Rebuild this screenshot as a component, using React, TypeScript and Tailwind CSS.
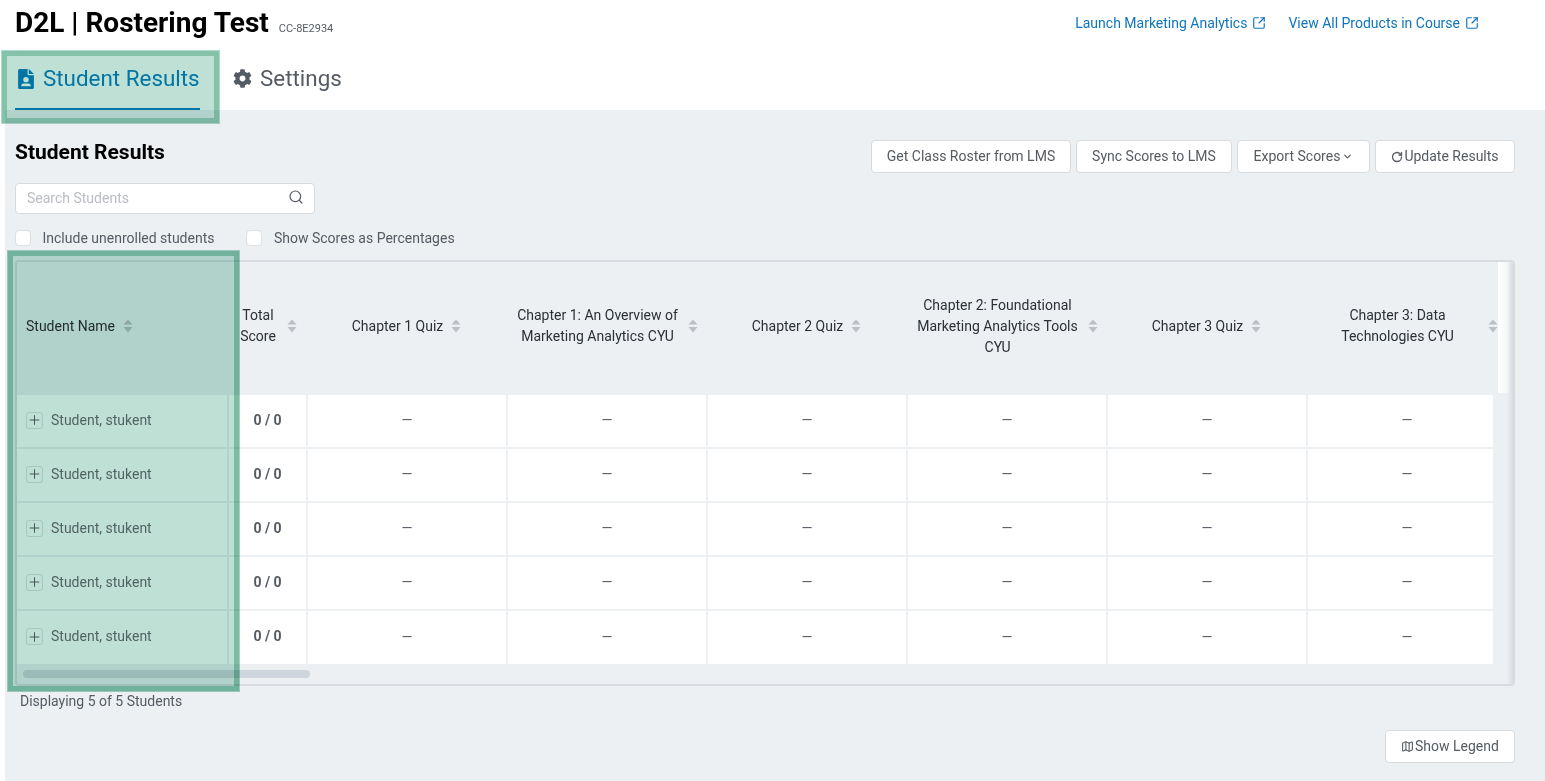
import { Search, SquareArrowOutUpRight, ChevronDown, RotateCw, Plus, Map } from "lucide-react";

const chapters = [
  "Chapter 1 Quiz",
  "Chapter 1: An Overview of Marketing Analytics CYU",
  "Chapter 2 Quiz",
  "Chapter 2: Foundational Marketing Analytics Tools CYU",
  "Chapter 3 Quiz",
  "Chapter 3: Data Technologies CYU",
];

const SortIcon = () => (
  <svg width="10" height="14" viewBox="0 0 10 14" className="shrink-0 text-[#bcc0c6]" fill="currentColor">
    <path d="M5 0.5 L9.5 5.5 H0.5 Z" />
    <path d="M5 13.5 L9.5 8 H0.5 Z" />
  </svg>
);

const FileUser = () => (
  <svg width="16" height="20" viewBox="0 0 15 19" fill="currentColor" className="shrink-0">
    <path
      fillRule="evenodd"
      d="M1.5 0 H9 V5 a1 1 0 0 0 1 1 H15 V17.5 a1.5 1.5 0 0 1-1.5 1.5 H1.5 A1.5 1.5 0 0 1 0 17.5 V1.5 A1.5 1.5 0 0 1 1.5 0 Z M7.5 7.5 a2.6 2.6 0 1 0 0 5.2 a2.6 2.6 0 0 0 0-5.2 Z M3 16.4 h9 v-1 a2 2 0 0 0-2-1.6 H5 a2 2 0 0 0-2 1.6 Z"
    />
    <path d="M10.2 0 L15 4.8 H10.2 Z" />
  </svg>
);

const Gear = () => (
  <svg width="19" height="19" viewBox="0 0 512 512" fill="currentColor" className="shrink-0">
    <path d="M487.4 315.7l-42.6-24.6c4.3-23.2 4.3-47 0-70.2l42.6-24.6c4.9-2.8 7.1-8.6 5.5-14-11.1-35.6-30-67.8-54.7-94.6-3.8-4.1-10-5.1-14.8-2.3L380.8 110c-17.9-15.4-38.5-27.3-60.8-35.1V25.8c0-5.6-3.9-10.5-9.4-11.7-36.7-8.2-74.3-7.8-109.2 0-5.5 1.2-9.4 6.1-9.4 11.7V75c-22.2 7.9-42.8 19.8-60.8 35.1L88.7 85.5c-4.9-2.8-11-1.9-14.8 2.3-24.7 26.7-43.6 58.9-54.7 94.6-1.7 5.4.6 11.2 5.5 14L67.3 221c-4.3 23.2-4.3 47 0 70.2l-42.6 24.6c-4.9 2.8-7.1 8.6-5.5 14 11.1 35.6 30 67.8 54.7 94.6 3.8 4.1 10 5.1 14.8 2.3l42.6-24.6c17.9 15.4 38.5 27.3 60.8 35.1v49.2c0 5.6 3.9 10.5 9.4 11.7 36.7 8.2 74.3 7.8 109.2 0 5.5-1.2 9.4-6.1 9.4-11.7v-49.2c22.2-7.9 42.8-19.8 60.8-35.1l42.6 24.6c4.9 2.8 11 1.9 14.8-2.3 24.7-26.7 43.6-58.9 54.7-94.6 1.5-5.5-.7-11.3-5.6-14.1zM256 336c-44.1 0-80-35.9-80-80s35.9-80 80-80 80 35.9 80 80-35.9 80-80 80z" />
  </svg>
);

const Btn = ({ children, className = "" }: { children: React.ReactNode; className?: string }) => (
  <button className={`h-[33px] rounded-[4px] border border-[#d8dade] bg-white text-[14px] text-[#555b63] flex items-center justify-center ${className}`}>
    {children}
  </button>
);

const Check = ({ label, className = "" }: { label: string; className?: string }) => (
  <label className={`flex items-center ${className}`}>
    <span className="w-[16px] h-[16px] rounded-[4px] border border-[#dcdfe3] bg-white shrink-0" />
    <span className="ml-[11.5px] text-[14px] text-[#555b63]">{label}</span>
  </label>
);

const Row = ({ last }: { last?: boolean }) => (
  <div className={`flex ${last ? "h-[53px]" : "h-[54px] border-b-2 border-[#edf0f3]"}`}>
    <div className="w-[212px] shrink-0 flex items-center bg-white border-r-2 border-[#edf0f3] pl-[9px] pb-[2px]">
      <span className="w-[17px] h-[17px] rounded-[3px] border border-[#dfe3e6] flex items-center justify-center text-[#555b63]">
        <Plus size={16} strokeWidth={1.5} />
      </span>
      <span className="ml-[8px] text-[14px] text-[#6b7178]">Student, stukent</span>
    </div>
    <div className="w-[79px] shrink-0 flex items-center justify-center bg-white border-r-2 border-[#edf0f3] pb-[2px] text-[14px] font-bold text-[#555b63]">
      0 / 0
    </div>
    {chapters.map((c, i) => (
      <div
        key={c}
        className={`w-[200px] shrink-0 flex items-center justify-center bg-white pb-[1px] text-[14px] text-[#555b63] ${i < 5 ? "border-r-2 border-[#edf0f3]" : "pr-[2px]"}`}
      >
        —
      </div>
    ))}
  </div>
);

export default function App() {
  return (
    <div className="relative w-[1545px] h-[781px] overflow-hidden bg-white font-[family-name:Roboto]">
      <div className="h-[51px] flex items-center justify-between pl-[15px] pr-[66px]">
        <div className="flex items-baseline -mt-[5px]">
          <h1 className="text-[28px] leading-[44px] font-bold text-black">D2L | Rostering Test</h1>
          <span className="ml-[10px] text-[11px] text-[#555b63]">CC-8E2934</span>
        </div>
        <div className="flex items-center gap-[22px] text-[14px] text-[#0f75bc] -mt-[5px]">
          <a className="flex items-center gap-[5px]">
            Launch Marketing Analytics <SquareArrowOutUpRight size={14} strokeWidth={2} />
          </a>
          <a className="flex items-center gap-[5px]">
            View All Products in Course <SquareArrowOutUpRight size={14} strokeWidth={2} />
          </a>
        </div>
      </div>

      <div className="h-[59px] flex pl-[15px]">
        <div className="w-[185px] h-[59px] border-b-2 border-[#0085c8] flex items-center pl-[3px] pb-[2px] text-[#0085c8] text-[22.4px]">
          <FileUser />
          <span className="ml-[9px] whitespace-nowrap">Student Results</span>
        </div>
        <div className="ml-[33px] flex items-center pb-[4px] text-[#555b63] text-[22.4px]">
          <Gear />
          <span className="ml-[8px]">Settings</span>
        </div>
      </div>

      <main className="ml-[5px] h-[671px] bg-[#edf0f3] pl-[10px] pr-[30px]">
        <div className="flex justify-between pt-[30px]">
          <h2 className="text-[21px] leading-[24px] font-bold text-black">Student Results</h2>
          <div className="flex gap-[5px]">
            <Btn className="w-[200px]">Get Class Roster from LMS</Btn>
            <Btn className="w-[156px]">Sync Scores to LMS</Btn>
            <Btn className="w-[133px]">
              Export Scores
              <ChevronDown size={11} strokeWidth={2.6} className="ml-[2px]" />
            </Btn>
            <Btn className="w-[140px]">
              <RotateCw size={12} strokeWidth={2.6} className="mr-[1px]" />
              Update Results
            </Btn>
          </div>
        </div>

        <div className="mt-[10px] w-[300px] h-[31px] rounded-[4px] border border-[#d8dade] bg-white flex items-center justify-between pl-[11px] pr-[10px]">
          <span className="text-[14px] text-[#b9bdc3]">Search Students</span>
          <Search size={16} strokeWidth={1.8} className="text-[#555b63] mb-[3px]" />
        </div>

        <div className="mt-[16px] flex h-[16px]">
          <Check label="Include unenrolled students" />
          <Check label="Show Scores as Percentages" className="ml-[32px]" />
        </div>

        <div className="mt-[14px] relative w-[1500px] h-[426px] rounded-[4px] border-2 border-[#d8dbe0] overflow-hidden flex">
          <div className="w-[1481px] overflow-hidden shrink-0">
            <div className="flex h-[133px] pb-[5px] text-[14px] leading-[21px] text-[#2b3036]">
              <div className="w-[212px] shrink-0 flex items-center pl-[9px] gap-[8px]">
                Student Name <SortIcon />
              </div>
              <div className="w-[79px] shrink-0 flex items-center justify-center gap-[9px] pr-[2px]">
                <span className="text-center w-[40px]">Total Score</span>
                <SortIcon />
              </div>
              {chapters.map((c) => (
                <div key={c} className="w-[200px] shrink-0 flex items-center justify-center pr-[3px] gap-[8px]">
                  <span className="text-center max-w-[165px]">{c}</span>
                  <SortIcon />
                </div>
              ))}
            </div>
            <div className="w-[1476px] overflow-hidden">
              <Row />
              <Row />
              <Row />
              <Row />
              <Row last />
            </div>
          </div>
          <div className="flex-1 relative">
            <div className="absolute left-0 top-0 right-0 h-[131px] bg-gradient-to-r from-white to-[#eef0f3]" />
            <div className="absolute top-0 bottom-0 right-0 w-[6px] bg-gradient-to-r from-transparent to-[#d8dbe0]" />
          </div>
          <div className="absolute left-[6px] bottom-[6px] w-[287px] h-[8px] rounded-full bg-[#cfd5dd]" />
        </div>

        <p className="mt-[7px] ml-[5px] text-[14px] leading-[16px] text-[#555b63]">Displaying 5 of 5 Students</p>

        <div className="flex justify-end mt-[21px]">
          <Btn className="w-[130px]">
            <Map size={13} strokeWidth={2} className="mr-[1px]" />
            Show Legend
          </Btn>
        </div>
      </main>

      <div className="absolute left-[2px] top-[51px] w-[217px] h-[72px] border-[5px] border-[#84c2aa] bg-[#bfe0d4] mix-blend-multiply shadow-[0_0_0_1px_#b0d9c9]" />
      <div className="absolute left-[8px] top-[251px] w-[231px] h-[440px] border-[5px] border-[#7abda4] bg-[#bfe0d4] mix-blend-multiply shadow-[0_0_0_1px_#a6d3c1]" />
    </div>
  );
}
